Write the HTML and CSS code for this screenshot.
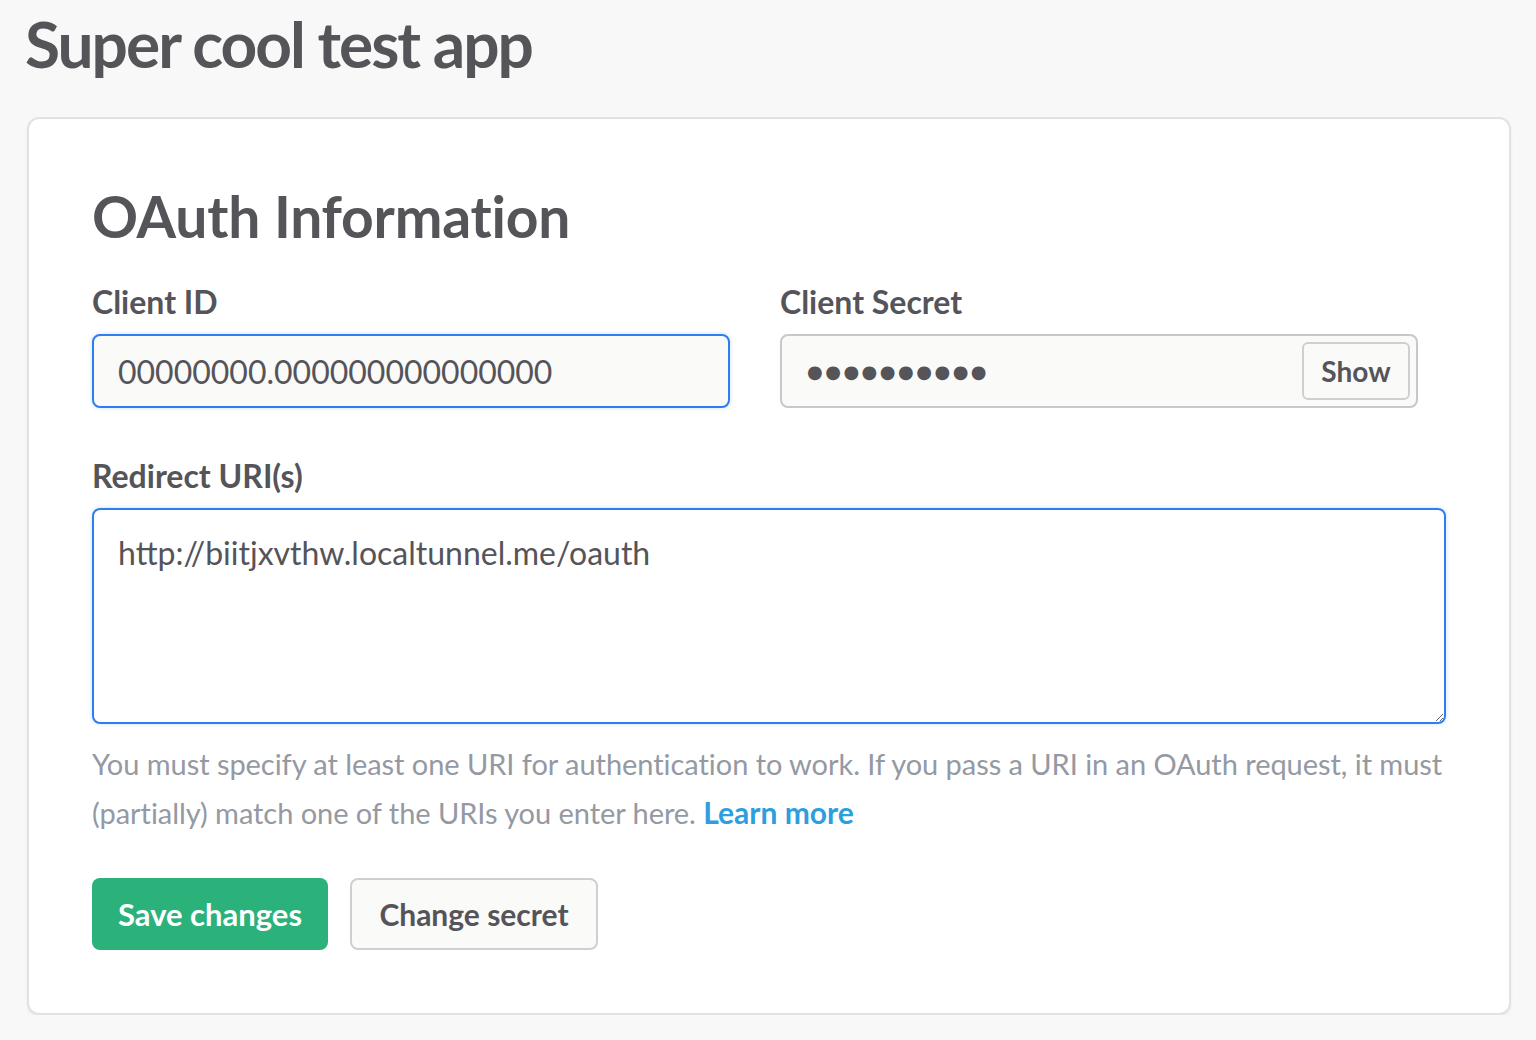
FILE: index.html
```html
<!DOCTYPE html>
<html lang="en">
<head>
<meta charset="utf-8">
<title>Super cool test app</title>
<link rel="stylesheet" href="styles.css">
</head>
<body>
<div class="page">
  <h1 class="app-title">Super cool test app</h1>
  <section class="card">
    <h2 class="card-title">OAuth Information</h2>
    <div class="cred-row">
      <div class="field">
        <label class="field-label" for="client-id">Client ID</label>
        <input id="client-id" class="text-input focused" type="text" value="00000000.000000000000000" readonly>
      </div>
      <div class="field">
        <label class="field-label">Client Secret</label>
        <div class="secret-input">
          <span class="dots">●●●●●●●●●●</span>
          <button class="show-btn" type="button">Show</button>
        </div>
      </div>
    </div>
    <div class="field redirect">
      <label class="field-label" for="redirect">Redirect URI(s)</label>
      <textarea id="redirect" class="textarea focused">http://biitjxvthw.localtunnel.me/oauth</textarea>
    </div>
    <p class="help">You must specify at least one URI for authentication to work. If you pass a URI in an OAuth request, it must (partially) match one of the URIs you enter here. <a class="learn" href="#">Learn more</a></p>
    <div class="actions">
      <button class="btn btn-primary" type="button">Save changes</button>
      <button class="btn btn-outline" type="button">Change secret</button>
    </div>
  </section>
</div>
</body>
</html>
```
FILE: styles.css
```css
* { box-sizing: border-box; }
html, body {
  margin: 0;
  padding: 0;
  background: #f8f8f8;
}
body {
  font-family: Lato, "Open Sans", sans-serif;
  color: #555459;
}
.page {
  padding: 5px 25px 0 27px;
}
.app-title {
  margin: 0 0 0 -2px;
  font-size: 64px;
  line-height: 77px;
  font-weight: 700;
  letter-spacing: -2px;
  color: #555459;
}
.card {
  margin-top: 35px;
  background: #fff;
  border: 2px solid #e2e2e2;
  border-radius: 12px;
  box-shadow: 0 2px 3px rgba(0,0,0,0.06);
  padding: 64px 63px 63px 63px;
}
.card-title {
  margin: 0;
  font-size: 57px;
  line-height: 67px;
  font-weight: 700;
  letter-spacing: -0.2px;
  color: #555459;
}
.cred-row {
  display: grid;
  grid-template-columns: 638px 638px;
  column-gap: 50px;
  margin-top: 34px;
}
.field {
  display: flex;
  flex-direction: column;
}
.field-label {
  font-size: 32px;
  line-height: 36px;
  font-weight: 700;
  margin-bottom: 14px;
  color: #555459;
}
.text-input {
  height: 74px;
  border: 2px solid #c5c5c5;
  border-radius: 8px;
  background: #fafaf9;
  padding: 0 24px;
  font-family: Lato, sans-serif;
  font-size: 32px;
  color: #555459;
  outline: none;
}
.focused {
  border-color: #2d7ff0;
  box-shadow: 0 0 4px rgba(45,127,240,0.25);
}
.secret-input {
  height: 74px;
  border: 2px solid #c8c8c8;
  border-radius: 8px;
  background: #fafaf9;
  padding: 0 6px 0 25px;
  display: flex;
  align-items: center;
  justify-content: space-between;
}
.dots {
  font-size: 18px;
  letter-spacing: 2.5px;
  color: #555459;
  font-family: "DejaVu Sans", sans-serif;
}
.show-btn {
  height: 58px;
  width: 108px;
  border: 2px solid #cfcfcf;
  border-radius: 6px;
  background: #fafaf9;
  font-family: Lato, sans-serif;
  font-size: 28px;
  font-weight: 700;
  color: #555459;
  padding: 0;
}
.redirect {
  margin-top: 50px;
}
.textarea {
  height: 216px;
  border: 2px solid #2d7ff0;
  border-radius: 8px;
  background: #fff;
  padding: 24px 24px;
  font-family: Lato, sans-serif;
  font-size: 32px;
  line-height: 1.2;
  color: #555459;
  resize: vertical;
  outline: none;
}
.help {
  margin: 16px 0 0 0;
  font-size: 29px;
  line-height: 48px;
  letter-spacing: -0.05px;
  color: #9499a3;
}
.learn {
  color: #2d9ee0;
  font-weight: 700;
  letter-spacing: 0;
  font-size: 30px;
  text-decoration: none;
}
.actions {
  display: flex;
  gap: 22px;
  margin-top: 41px;
}
.btn {
  height: 72px;
  border-radius: 8px;
  font-family: Lato, sans-serif;
  font-size: 30px;
  font-weight: 700;
  padding: 0 20px;
}
.btn-primary {
  width: 236px;
  background: #2bb27b;
  border: none;
  color: #fff;
  font-size: 31px;
}
.btn-outline {
  width: 248px;
  background: #fafaf9;
  border: 2px solid #cfcfcf;
  color: #555459;
}
```
